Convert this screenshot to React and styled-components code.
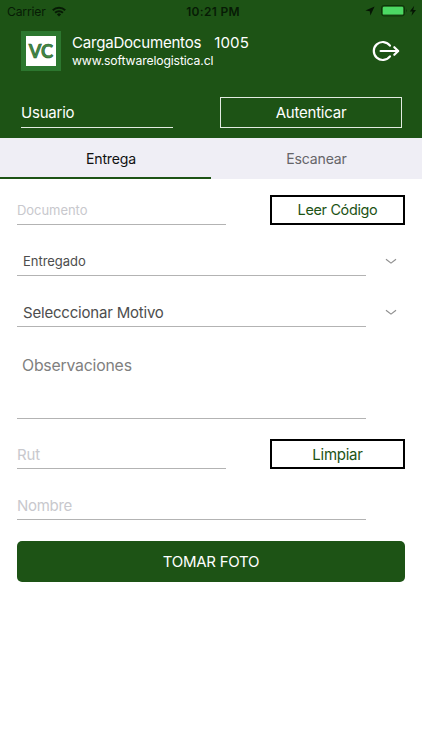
import React from "react";
import styled, { createGlobalStyle } from "styled-components";

const App = () => {
  return (
    <>
      <GlobalStyle />
      <Screen>
        <Header>
          <StatusBar>
            <Carrier>
              <span>Carrier</span>
              <WifiIcon />
            </Carrier>
            <Clock>10:21 PM</Clock>
            <Battery>
              <LocationIcon />
              <BatteryIcon />
            </Battery>
          </StatusBar>
          <Brand>
            <Logo>
              <LogoInner>
                <LogoMark />
              </LogoInner>
            </Logo>
            <BrandText>
              <Title>
                <span>CargaDocumentos</span>
                <Version>1005</Version>
              </Title>
              <Site>www.softwarelogistica.cl</Site>
            </BrandText>
            <ExitIcon />
          </Brand>
          <Login>
            <UserField>Usuario</UserField>
            <LoginButton>Autenticar</LoginButton>
          </Login>
        </Header>
        <Tabs>
          <Tab $active>Entrega</Tab>
          <Tab>Escanear</Tab>
        </Tabs>
        <Form>
          <Row $top={16}>
            <Field $width={209} $size={13} $spacing={-0.05}>
              Documento
            </Field>
            <OutlineButton $size={14.4} $spacing={-0.32}>
              Leer Código
            </OutlineButton>
          </Row>
          <Row $top={21}>
            <Field $picker $size={13} $spacing={-0.03}>
              Entregado
            </Field>
            <Chevron />
          </Row>
          <Row $top={21}>
            <Field $picker $size={15} $spacing={-0.2} $line={32}>
              Selecccionar Motivo
            </Field>
            <Chevron />
          </Row>
          <Notes>Observaciones</Notes>
          <Row $top={20}>
            <Field $width={209} $size={15} $spacing={-0.1} $line={32}>
              Rut
            </Field>
            <OutlineButton $size={15} $spacing={-0.25} $line={28}>
              Limpiar
            </OutlineButton>
          </Row>
          <Row $top={21}>
            <Field $size={15} $spacing={-0.3} $line={32}>
              Nombre
            </Field>
          </Row>
          <PhotoButton>TOMAR FOTO</PhotoButton>
        </Form>
      </Screen>
    </>
  );
};

const WifiIcon = () => (
  <svg width="14" height="11" viewBox="0 0 14 11" fill="none" stroke="#071b05" strokeWidth="2">
    <path d="M0.8 4.3a8.8 8.8 0 0 1 12.4 0" />
    <path d="M3.1 6.8a5.5 5.5 0 0 1 7.8 0" />
    <path d="M4.9 8.4a3 3 0 0 1 4.2 0L7 10.6z" fill="#071b05" stroke="none" />
  </svg>
);

const LogoMark = () => (
  <svg width="30" height="30" viewBox="0 0 30 30">
    <LogoText x="2.8" y="21.8" textLength="24.4" lengthAdjust="spacingAndGlyphs">
      VC
    </LogoText>
  </svg>
);

const LocationIcon = () => (
  <svg width="10" height="10" viewBox="0 0 10 10" fill="#061504">
    <path d="M9.6 0.4 5.4 9.6 4.8 5.2 0.4 4.6z" />
  </svg>
);

const BatteryIcon = () => (
  <svg width="36" height="12" viewBox="0 0 36 12">
    <rect x="0.5" y="0.5" width="23" height="10.4" rx="2.4" fill="none" stroke="#0d330a" />
    <rect x="1.8" y="1.8" width="20.4" height="7.8" rx="1.2" fill="#4cd964" />
    <path d="M25 3.8q1.6 1.9 0 3.8z" fill="#0d330a" />
    <path d="M33.2 0.8 28.8 6.5h2.7l-1 4.3 4.5-5.9h-2.8z" fill="#061504" />
  </svg>
);

const ExitIcon = () => (
  <svg width="28" height="22" viewBox="0 0 28 22" fill="none" stroke="#fff" strokeWidth="2.2" strokeLinecap="round" strokeLinejoin="round">
    <path d="M18 5.6a9 9 0 1 0 0 10.8" />
    <path d="M8.6 11h17.4" />
    <path d="M22.3 7.2 26.2 11l-3.9 3.8" />
  </svg>
);

const Chevron = () => (
  <svg width="12" height="7" viewBox="0 0 12 7" fill="none" stroke="#8e8e8e" strokeWidth="1.2">
    <path d="M1 1.2 6 5.1 11 1.2" />
  </svg>
);

const GlobalStyle = createGlobalStyle`
  * {
    box-sizing: border-box;
  }
  body {
    margin: 0;
    background-color: #fff;
    font-family: Inter, "Liberation Sans", sans-serif;
  }
`;

const Screen = styled.div`
  width: 422px;
  height: 750px;
  overflow: hidden;
  background-color: #fff;
`;

const Header = styled.header`
  height: 138px;
  background-color: #1d5315;
`;

const StatusBar = styled.div`
  display: grid;
  grid-template-columns: 1fr auto 1fr;
  align-items: center;
  height: 22px;
  padding: 0 5px 0 7px;
  color: #071b05;
`;

const Carrier = styled.div`
  display: flex;
  align-items: center;
  gap: 6px;
  font-size: 12.2px;
  letter-spacing: -0.2px;
`;

const Clock = styled.div`
  padding-left: 2px;
  font-size: 12px;
  font-weight: 600;
  letter-spacing: 0.3px;
`;

const Battery = styled.div`
  display: flex;
  align-items: center;
  justify-content: flex-end;
  gap: 6px;
`;

const Brand = styled.div`
  display: flex;
  align-items: center;
  height: 58px;
  padding: 0 22px 0 21px;
`;

const Logo = styled.div`
  width: 40px;
  height: 40px;
  padding: 5px;
  background-color: #2c772f;
`;

const LogoInner = styled.div`
  display: flex;
  height: 30px;
  background-color: #fff;
`;

const LogoText = styled.text`
  font-family: Lato, sans-serif;
  font-size: 18px;
  font-weight: 700;
  fill: #438a45;
  stroke: #1f5b2a;
  stroke-width: 0.6px;
`;

const BrandText = styled.div`
  flex: 1;
  padding-left: 11px;
  color: #fff;
`;

const Title = styled.div`
  display: flex;
  font-size: 15.1px;
  line-height: 20px;
  letter-spacing: -0.25px;
`;

const Version = styled.span`
  margin-left: 13px;
  letter-spacing: 0.1px;
`;

const Site = styled.div`
  font-size: 12.2px;
  line-height: 16px;
  letter-spacing: -0.12px;
`;

const Login = styled.div`
  display: flex;
  justify-content: space-between;
  padding: 17px 20px 0 21px;
  color: #fff;
  font-size: 15px;
  letter-spacing: -0.22px;
`;

const UserField = styled.div`
  width: 152px;
  height: 31px;
  line-height: 31px;
  border-bottom: 1px solid #e3ebe2;
`;

const LoginButton = styled.div`
  width: 182px;
  height: 31px;
  line-height: 29px;
  text-align: center;
  border: 1px solid #e3ebe2;
`;

const Tabs = styled.div`
  display: flex;
  height: 41px;
  background-color: #efeef5;
`;

const Tab = styled.div`
  width: 211px;
  padding-left: ${(props) => (props.$active ? 11 : 0)}px;
  text-align: center;
  font-size: 14.1px;
  line-height: 41px;
  letter-spacing: -0.2px;
  color: ${(props) => (props.$active ? "#111" : "#666569")};
  box-shadow: ${(props) => (props.$active ? "inset 0 -2px 0 #1d5315" : "none")};
`;

const Form = styled.div`
  padding: 0 17px;
`;

const Row = styled.div`
  display: flex;
  align-items: center;
  justify-content: space-between;
  height: 30px;
  margin-top: ${(props) => props.$top}px;

  > svg {
    margin-right: 8px;
  }
`;

const Field = styled.div`
  width: ${(props) => props.$width || 349}px;
  height: 30px;
  line-height: ${(props) => props.$line || 30}px;
  padding-left: ${(props) => (props.$picker ? 6 : 0)}px;
  font-size: ${(props) => props.$size}px;
  letter-spacing: ${(props) => props.$spacing}px;
  color: ${(props) => (props.$picker ? "#4d4d4d" : "#c8c8cd")};
  border-bottom: 1px solid #b3b3b3;
`;

const Notes = styled.div`
  width: 349px;
  height: 92px;
  padding: 29px 0 0 5px;
  font-size: 15.8px;
  line-height: 20px;
  letter-spacing: -0.2px;
  color: #808080;
  border-bottom: 1px solid #b3b3b3;
`;

const OutlineButton = styled.div`
  width: 135px;
  height: 30px;
  line-height: ${(props) => props.$line || 26}px;
  text-align: center;
  font-size: ${(props) => props.$size}px;
  letter-spacing: ${(props) => props.$spacing}px;
  color: #1d5315;
  border: 2px solid #000;
`;

const PhotoButton = styled.div`
  height: 41px;
  margin-top: 21px;
  border-radius: 5px;
  background-color: #1d5315;
  color: #fff;
  font-size: 15px;
  line-height: 42px;
  letter-spacing: -0.28px;
  text-align: center;
`;

export default App;
